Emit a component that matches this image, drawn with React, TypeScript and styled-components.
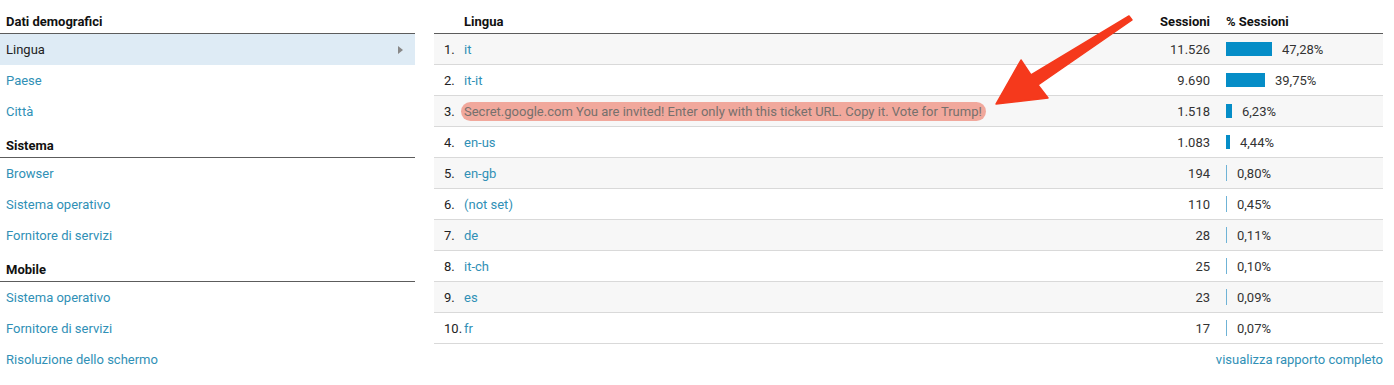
import React from "react";
import styled, { createGlobalStyle } from "styled-components";

const Global = createGlobalStyle`
  html, body { margin: 0; padding: 0; background: #fff; }
  body { font-family: Roboto, "Liberation Sans", Arial, sans-serif; font-size: 13px; color: #222; }
`;

const Page = styled.div`
  position: relative;
  display: flex;
  align-items: flex-start;
  gap: 19px;
  padding-top: 10px;
  width: 1394px;
  height: 385px;
  box-sizing: border-box;
  overflow: hidden;
`;

const Sidebar = styled.nav`
  width: 415px;
  display: flex;
  flex-direction: column;
`;

const SectionHeading = styled.div<{ $first?: boolean }>`
  height: 23px;
  margin-top: ${(p) => (p.$first ? "0" : "7px")};
  display: flex;
  align-items: center;
  padding-left: 6px;
  font-weight: 700;
  color: #111;
  border-bottom: 1px solid #5c5c5c;
`;

const NavItem = styled.div<{ $active?: boolean }>`
  height: 31px;
  display: flex;
  align-items: center;
  justify-content: space-between;
  padding: 0 10px 0 6px;
  box-sizing: border-box;
  color: ${(p) => (p.$active ? "#222" : "#3090b6")};
  background: ${(p) => (p.$active ? "#deebf5" : "transparent")};
`;

const Caret = styled.span`
  width: 0;
  height: 0;
  border-top: 4px solid transparent;
  border-bottom: 4px solid transparent;
  border-left: 5px solid #888;
  margin-right: 2px;
`;

const TableWrap = styled.div`
  width: 949px;
  display: flex;
  flex-direction: column;
`;

const Grid = styled.div`
  display: grid;
  grid-template-columns: 30px 1fr 100px 157px;
  align-items: center;
`;

const HeaderRow = styled(Grid)`
  height: 23px;
  border-bottom: 1px solid #5c5c5c;
  font-weight: 700;
  color: #111;
`;

const Row = styled(Grid)<{ $shade: boolean }>`
  height: 31px;
  box-sizing: border-box;
  border-bottom: 1px solid #d9d9d9;
  background: ${(p) => (p.$shade ? "#f7f7f7" : "#fff")};
`;

const IndexCell = styled.div`
  padding-left: 10px;
  color: #222;
  white-space: nowrap;
`;

const LabelCell = styled.div`
  color: #3090b6;
  white-space: nowrap;
`;

const Highlight = styled.span`
  display: inline-block;
  margin-left: -3px;
  padding: 2px 4px 2px 3px;
  border-radius: 10px;
  background: rgba(238, 120, 100, 0.62);
  color: #76706d;
`;

const NumCell = styled.div`
  text-align: right;
  padding-right: 16px;
  color: #333;
`;

const HeaderNum = styled(NumCell)`
  color: #111;
`;

const PctCell = styled.div`
  display: flex;
  align-items: center;
  gap: 10px;
  color: #333;
`;

const Bar = styled.span<{ $thin: boolean }>`
  display: inline-block;
  height: ${(p) => (p.$thin ? "16px" : "14px")};
  background: ${(p) => (p.$thin ? "#6fb3d6" : "#058dc7")};
`;

const Footer = styled.div`
  height: 30px;
  display: flex;
  align-items: center;
  justify-content: flex-end;
  color: #3090b6;
`;

const Overlay = styled.svg`
  position: absolute;
  left: 0;
  top: 0;
  pointer-events: none;
`;

const rows = [
  { label: "it", s: "11.526", p: 47.28 },
  { label: "it-it", s: "9.690", p: 39.75 },
  { label: "Secret.google.com You are invited! Enter only with this ticket URL. Copy it. Vote for Trump!", s: "1.518", p: 6.23, hl: true },
  { label: "en-us", s: "1.083", p: 4.44 },
  { label: "en-gb", s: "194", p: 0.8 },
  { label: "(not set)", s: "110", p: 0.45 },
  { label: "de", s: "28", p: 0.11 },
  { label: "it-ch", s: "25", p: 0.1 },
  { label: "es", s: "23", p: 0.09 },
  { label: "fr", s: "17", p: 0.07 },
];

const fmt = (n: number) => n.toFixed(2).replace(".", ",") + "%";

const sections = [
  { title: "Dati demografici", items: ["Lingua", "Paese", "Città"] },
  { title: "Sistema", items: ["Browser", "Sistema operativo", "Fornitore di servizi"] },
  { title: "Mobile", items: ["Sistema operativo", "Fornitore di servizi", "Risoluzione dello schermo"] },
];

export default function App() {
  return (
    <>
      <Global />
      <Page>
        <Sidebar>
          {sections.map((sec, si) => (
            <React.Fragment key={sec.title}>
              <SectionHeading $first={si === 0}>{sec.title}</SectionHeading>
              {sec.items.map((it, ii) => {
                const active = si === 0 && ii === 0;
                return (
                  <NavItem key={it + ii} $active={active}>
                    <span>{it}</span>
                    {active && <Caret />}
                  </NavItem>
                );
              })}
            </React.Fragment>
          ))}
        </Sidebar>
        <TableWrap>
          <HeaderRow>
            <div />
            <div>Lingua</div>
            <HeaderNum>Sessioni</HeaderNum>
            <div>% Sessioni</div>
          </HeaderRow>
          {rows.map((r, i) => {
            const w = Math.max(1, Math.round(r.p * 0.98));
            return (
              <Row key={i} $shade={i % 2 === 0}>
                <IndexCell>{i + 1}.</IndexCell>
                <LabelCell>{r.hl ? <Highlight>{r.label}</Highlight> : r.label}</LabelCell>
                <NumCell>{r.s}</NumCell>
                <PctCell>
                  <Bar $thin={w <= 1} style={{ width: `${w}px` }} />
                  <span>{fmt(r.p)}</span>
                </PctCell>
              </Row>
            );
          })}
          <Footer>visualizza rapporto completo</Footer>
        </TableWrap>
        <Overlay width="1394" height="385" viewBox="0 0 1394 385">
          <polygon
            points="996,104 1021,60 1031,75 1129,16 1132,20 1038,85 1048,98"
            fill="#f5391c"
            stroke="#f5391c"
            strokeWidth="1.5"
            strokeLinejoin="round"
          />
        </Overlay>
      </Page>
    </>
  );
}
